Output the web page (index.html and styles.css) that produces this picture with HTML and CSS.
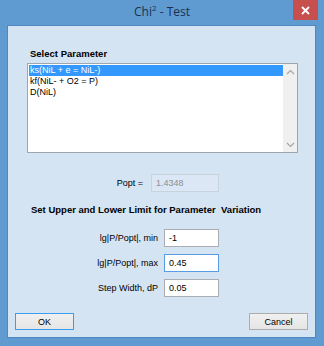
FILE: index.html
```html
<!DOCTYPE html>
<html lang="en">
<head>
  <meta charset="UTF-8">
  <title>Chi2 - Test</title>
  <link rel="stylesheet" href="styles.css">
</head>
<body>

  <div class="window">
    <div class="titlebar">
      <span class="title">Chi<sup>2</sup> - Test</span>
      <button class="close">
        <svg width="9" height="9" viewBox="0 0 9 9">
          <path d="M1 1 L8 8 M8 1 L1 8" stroke="#fff" stroke-width="1.8"/>
        </svg>
      </button>
    </div>

    <div class="client">
      <div class="section-title">Select Parameter</div>

      <div class="listbox">
        <ul class="items">
          <li class="selected">ks(NiL + e = NiL-)</li>
          <li>kf(NiL- + O2 = P)</li>
          <li>D(NiL)</li>
        </ul>
        <div class="scrollbar">
          <svg width="9" height="6" viewBox="0 0 9 6">
            <path d="M1 5 L4.5 1.5 L8 5" fill="none" stroke="#a6a6a6" stroke-width="1.2"/>
          </svg>
          <svg width="9" height="6" viewBox="0 0 9 6">
            <path d="M1 1 L4.5 4.5 L8 1" fill="none" stroke="#a6a6a6" stroke-width="1.2"/>
          </svg>
        </div>
      </div>

      <div class="field popt">
        <span class="label">Popt =</span>
        <div class="textbox disabled">1.4348</div>
      </div>

      <div class="section-title second">Set Upper and Lower Limit for Parameter&nbsp; Variation</div>

      <div class="limits">
        <div class="field">
          <span class="label">lg|P/Popt|, min</span>
          <div class="textbox">-1</div>
        </div>
        <div class="field">
          <span class="label">lg|P/Popt|, max</span>
          <div class="textbox focused">0.45</div>
        </div>
        <div class="field">
          <span class="label">Step Width, dP</span>
          <div class="textbox">0.05</div>
        </div>
      </div>

      <div class="buttons">
        <button class="btn default">OK</button>
        <button class="btn">Cancel</button>
      </div>
    </div>
  </div>

</body>
</html>
```

FILE: styles.css
```css
body {
  margin: 0;
  background: #5f9ad1;
  font-family: "Liberation Sans", Arial, sans-serif;
  font-size: 9px;
  color: #000;
}

.window {
  width: 324px;
  height: 346px;
  display: flex;
  flex-direction: column;
}

.titlebar {
  position: relative;
  height: 25px;
  text-align: center;
}

.title {
  font-family: "Open Sans", sans-serif;
  font-size: 12px;
  line-height: 24px;
  color: #1a3150;
}

.title sup {
  font-size: 8px;
  line-height: 0;
}

.close {
  position: absolute;
  top: 0;
  right: 6px;
  width: 25px;
  height: 20px;
  padding: 0;
  border: 0;
  background: #c7504f;
  display: flex;
  align-items: center;
  justify-content: center;
}

.client {
  margin: 0 8px 0 7px;
  height: 313px;
  box-sizing: border-box;
  background: #d5e4f3;
  border: 1px solid #4f88c0;
  padding: 22px 7px 0 7px;
}

.section-title {
  font-size: 9.5px;
  font-weight: bold;
  line-height: 12px;
  padding-left: 15px;
}

.section-title.second {
  margin-top: 12px;
  padding-left: 16px;
}

.listbox {
  margin: 3px 0 0 12px;
  width: 271px;
  height: 90px;
  box-sizing: border-box;
  border: 1px solid #9fa6ad;
  background: #fff;
  display: flex;
}

.items {
  list-style: none;
  margin: 0;
  padding: 1px 0 0 1px;
  flex: 1;
}

.items li {
  line-height: 11px;
  padding-left: 1px;
}

.items li.selected {
  background: #3399ff;
  color: #fff;
}

.scrollbar {
  width: 14px;
  background: #f0f0f0;
  display: flex;
  flex-direction: column;
  justify-content: space-between;
  align-items: center;
  padding: 5px 0 4px;
}

.field {
  display: flex;
  align-items: center;
}

.label {
  text-align: right;
  width: 143px;
  margin-right: 6px;
}

.popt {
  margin-top: 21px;
}

.popt .label {
  width: 128px;
  margin-right: 8px;
}

.textbox {
  width: 55px;
  height: 18px;
  box-sizing: border-box;
  border: 1px solid #abadb3;
  background: #fff;
  line-height: 16px;
  padding-left: 4px;
}

.textbox.disabled {
  width: 68px;
  background: #dbe7f4;
  border-color: #c9d3de;
  color: #8a8f96;
}

.textbox.focused {
  border-color: #569de5;
}

.limits {
  margin-top: 13px;
  display: flex;
  flex-direction: column;
  gap: 7px;
}

.buttons {
  margin-top: 16px;
  display: flex;
  justify-content: space-between;
}

.btn {
  width: 59px;
  height: 17px;
  padding: 0;
  font-family: "Liberation Sans", Arial, sans-serif;
  font-size: 9px;
  color: #000;
  border: 1px solid #adadad;
  background: linear-gradient(#f0f0f0, #e5e5e5);
}

.btn.default {
  border-color: #3c9cf0;
}
```
